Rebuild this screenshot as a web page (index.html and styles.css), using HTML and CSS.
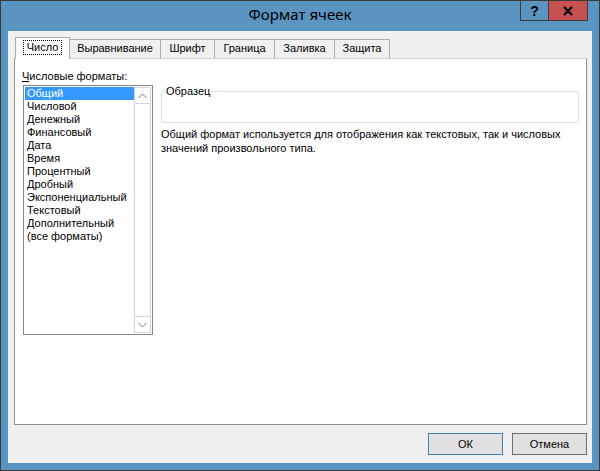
FILE: index.html
```html
<!DOCTYPE html>
<html>
<head>
<meta charset="utf-8">
<title>Формат ячеек</title>
<link rel="stylesheet" href="styles.css">
</head>
<body>
<div class="window">
  <div class="titlebar">
    <span class="title">Формат ячеек</span>
    <div class="caption">
      <div class="cap-btn help">?</div>
      <div class="cap-btn close">
        <svg width="12" height="10" viewBox="0 0 12 10"><path d="M2,1 L10,9 M10,1 L2,9"></path></svg>
      </div>
    </div>
  </div>

  <div class="client">
    <div class="tabs">
      <div class="tab active" style="width:55px"><span class="focus">Число</span></div>
      <div class="tab" style="width:92px">Выравнивание</div>
      <div class="tab" style="width:55px">Шрифт</div>
      <div class="tab" style="width:61px">Граница</div>
      <div class="tab" style="width:61px">Заливка</div>
      <div class="tab" style="width:56px">Защита</div>
    </div>

    <div class="panel">
      <div class="left-col">
        <div class="label"><u>Ч</u>исловые форматы:</div>
        <div class="listbox">
          <div class="items">
            <div class="item selected">Общий</div>
            <div class="item">Числовой</div>
            <div class="item">Денежный</div>
            <div class="item">Финансовый</div>
            <div class="item">Дата</div>
            <div class="item">Время</div>
            <div class="item">Процентный</div>
            <div class="item">Дробный</div>
            <div class="item">Экспоненциальный</div>
            <div class="item">Текстовый</div>
            <div class="item">Дополнительный</div>
            <div class="item">(все форматы)</div>
          </div>
          <div class="scrollbar">
            <div class="arrow up">
              <svg width="9" height="6" viewBox="0 0 9 6"><path d="M0.5,5 L4.5,1 L8.5,5"></path></svg>
            </div>
            <div class="track"></div>
            <div class="arrow down">
              <svg width="9" height="6" viewBox="0 0 9 6"><path d="M0.5,1 L4.5,5 L8.5,1"></path></svg>
            </div>
          </div>
        </div>
      </div>

      <div class="right-col">
        <fieldset class="sample">
          <legend>Образец</legend>
        </fieldset>
        <p class="desc">Общий формат используется для отображения как текстовых, так и числовых<br>значений произвольного типа.</p>
      </div>
    </div>

    <div class="buttons">
      <button class="btn default">ОК</button>
      <button class="btn">Отмена</button>
    </div>
  </div>
</div>
</body>
</html>
```

FILE: styles.css
```css
*{
  box-sizing:border-box;
}
body{
  margin:0;
  padding:0;
  background:#5a94c0;
  font-family:"Liberation Sans",Arial,sans-serif;
  font-size:11px;
  color:#000;
}
.window{
  width:600px;
  height:471px;
  border:1px solid #3a3a3a;
  background:#5a94c0;
  padding:0 7px 7px;
  display:flex;
  flex-direction:column;
}
.titlebar{
  position:relative;
  height:30px;
  margin:0 -7px;
  text-align:center;
}
.title{
  font-family:"Noto Sans",sans-serif;
  font-size:15px;
  line-height:26px;
  color:#000;
}
.caption{
  position:absolute;
  top:-1px;
  right:11px;
  display:flex;
}
.cap-btn{
  height:21px;
  border:1px solid #3c3c3c;
  display:flex;
  justify-content:center;
  align-items:center;
}
.help{
  width:29px;
  font-family:"Liberation Sans",Arial,sans-serif;
  font-weight:bold;
  font-size:14px;
  color:#000;
}
.close{
  width:40px;
  margin-left:-1px;
  background:#c75050;
}
.close path{
  stroke:#000;
  stroke-width:2.2;
  fill:none;
}
.client{
  flex:1;
  background:#f0f0f0;
  padding:6px 5px 8px 6px;
  display:flex;
  flex-direction:column;
}
.tabs{
  display:flex;
  align-items:flex-end;
  height:22px;
  margin-bottom:-1px;
  padding-left:1px;
  position:relative;
  z-index:1;
}
.tab{
  height:19px;
  margin-bottom:1px;
  margin-left:-1px;
  border:1px solid #acacac;
  border-bottom:none;
  background:#f0f0f0;
  text-align:center;
  line-height:17px;
  white-space:nowrap;
}
.tab:first-child{
  margin-left:0;
}
.tab.active{
  height:22px;
  margin-bottom:0;
  background:#fff;
  position:relative;
  z-index:2;
  line-height:18px;
}
.focus{
  display:inline-block;
  border:1px dotted #000;
  padding:0 3px;
  line-height:13px;
  margin-top:2px;
}
.panel{
  flex:1;
  background:#fff;
  border:1px solid #8e919a;
  border-top-color:#d2d2d2;
  display:flex;
  padding:11px 7px 0 7px;
  gap:8px;
}
.left-col{
  width:131px;
}
.label{
  line-height:13px;
  height:15px;
}
.listbox{
  margin-left:1px;
  width:130px;
  height:250px;
  border:1px solid #828790;
  padding:1px;
  display:flex;
}
.items{
  flex:1;
}
.item{
  height:13px;
  line-height:13px;
  padding-left:2px;
  white-space:nowrap;
}
.item.selected{
  background:#3399ff;
  color:#fff;
}
.scrollbar{
  width:17px;
  border:1px solid #d4d4d4;
  display:flex;
  flex-direction:column;
}
.arrow{
  height:16px;
  display:flex;
  justify-content:center;
  align-items:center;
}
.arrow.up{
  border-bottom:1px solid #d4d4d4;
}
.arrow.down{
  border-top:1px solid #d4d4d4;
}
.arrow path{
  fill:none;
  stroke:#7a7a7a;
  stroke-width:1;
}
.track{
  flex:1;
}
.right-col{
  flex:1;
  padding-top:15px;
}
.sample{
  margin:0;
  padding:0;
  height:38px;
  border:1px solid #d5dfe5;
  border-radius:3px;
}
.sample legend{
  padding:0 1px;
  margin-left:3px;
  line-height:13px;
}
.desc{
  margin:4px 0 0;
  line-height:14px;
  white-space:nowrap;
}
.buttons{
  display:flex;
  justify-content:flex-end;
  gap:9px;
  margin-top:8px;
}
.btn{
  width:75px;
  height:22px;
  background:#e1e1e1;
  border:1px solid #707070;
  font-family:"Liberation Sans",Arial,sans-serif;
  font-size:11px;
  color:#000;
  padding:0;
}
.btn.default{
  border-color:#3c7fb1;
}
```
